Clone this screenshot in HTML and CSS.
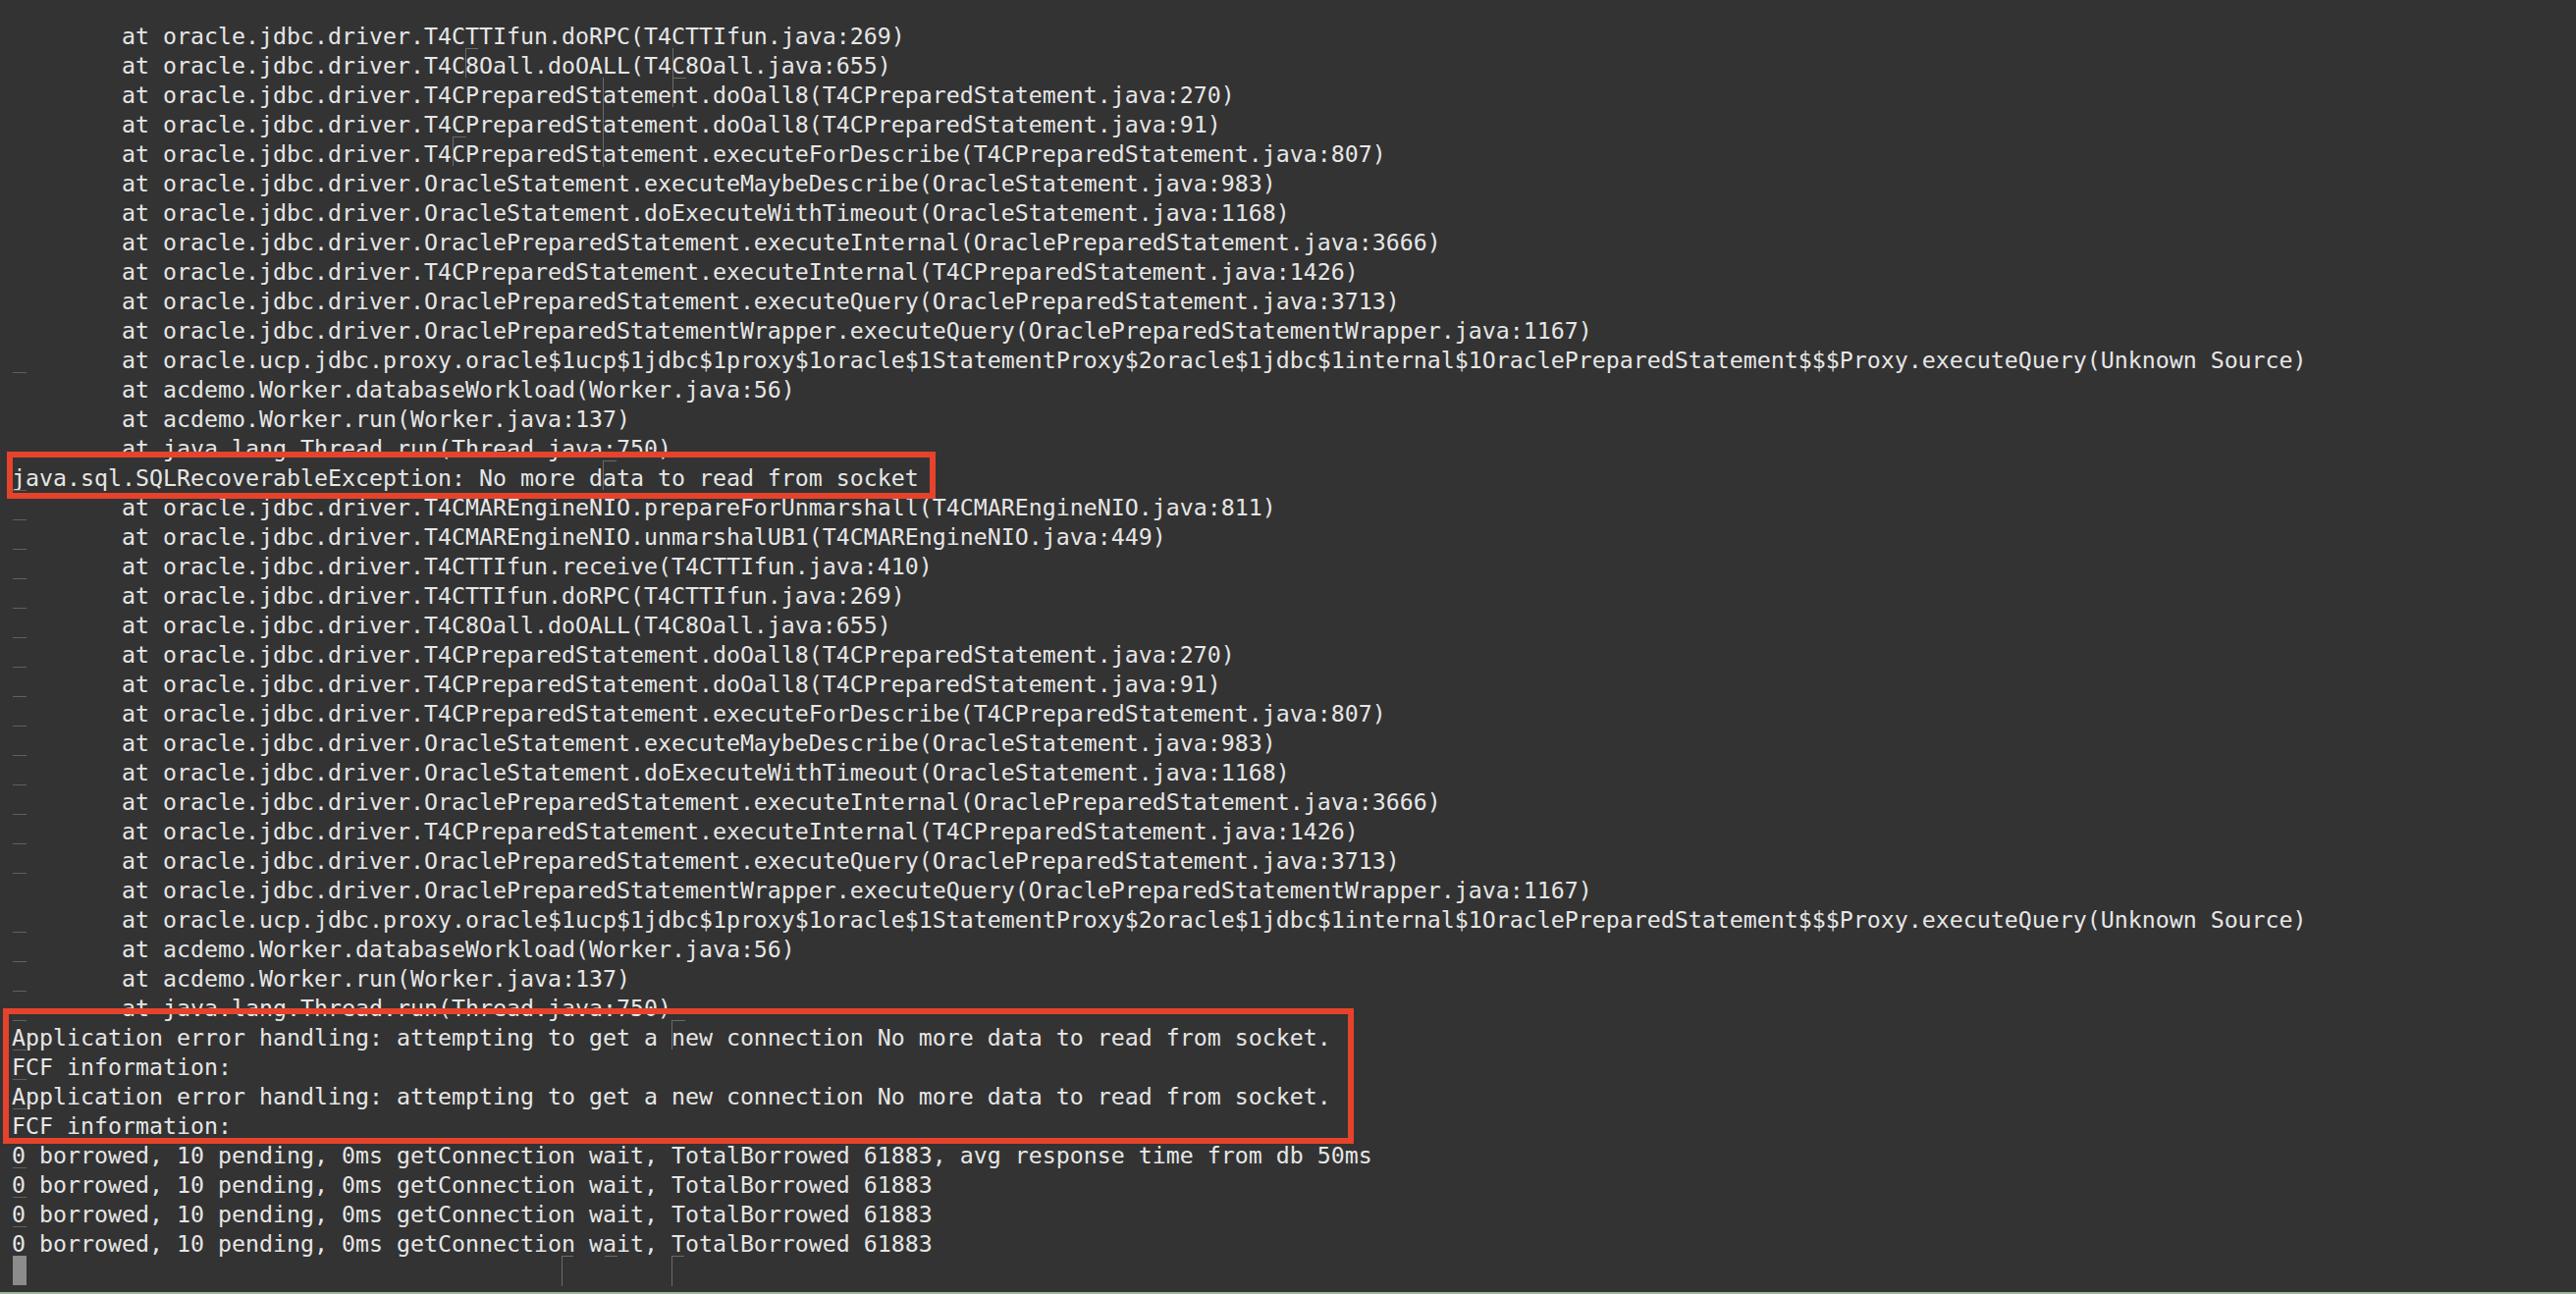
FILE: index.html
```html
<!DOCTYPE html>
<html>
<head>
<meta charset="utf-8">
<title>Terminal</title>
<link rel="stylesheet" href="styles.css">
</head>
<body>
<div class="term">
<div class="ln">        at oracle.jdbc.driver.T4CTTIfun.doRPC(T4CTTIfun.java:269)</div>
<div class="ln">        at oracle.jdbc.driver.T4C8Oall.doOALL(T4C8Oall.java:655)</div>
<div class="ln">        at oracle.jdbc.driver.T4CPreparedStatement.doOall8(T4CPreparedStatement.java:270)</div>
<div class="ln">        at oracle.jdbc.driver.T4CPreparedStatement.doOall8(T4CPreparedStatement.java:91)</div>
<div class="ln">        at oracle.jdbc.driver.T4CPreparedStatement.executeForDescribe(T4CPreparedStatement.java:807)</div>
<div class="ln">        at oracle.jdbc.driver.OracleStatement.executeMaybeDescribe(OracleStatement.java:983)</div>
<div class="ln">        at oracle.jdbc.driver.OracleStatement.doExecuteWithTimeout(OracleStatement.java:1168)</div>
<div class="ln">        at oracle.jdbc.driver.OraclePreparedStatement.executeInternal(OraclePreparedStatement.java:3666)</div>
<div class="ln">        at oracle.jdbc.driver.T4CPreparedStatement.executeInternal(T4CPreparedStatement.java:1426)</div>
<div class="ln">        at oracle.jdbc.driver.OraclePreparedStatement.executeQuery(OraclePreparedStatement.java:3713)</div>
<div class="ln">        at oracle.jdbc.driver.OraclePreparedStatementWrapper.executeQuery(OraclePreparedStatementWrapper.java:1167)</div>
<div class="ln">        at oracle.ucp.jdbc.proxy.oracle$1ucp$1jdbc$1proxy$1oracle$1StatementProxy$2oracle$1jdbc$1internal$1OraclePreparedStatement$$$Proxy.executeQuery(Unknown Source)</div>
<div class="ln m">        at acdemo.Worker.databaseWorkload(Worker.java:56)</div>
<div class="ln">        at acdemo.Worker.run(Worker.java:137)</div>
<div class="ln">        at java.lang.Thread.run(Thread.java:750)</div>
<div class="ln">java.sql.SQLRecoverableException: No more data to read from socket</div>
<div class="ln m">        at oracle.jdbc.driver.T4CMAREngineNIO.prepareForUnmarshall(T4CMAREngineNIO.java:811)</div>
<div class="ln m">        at oracle.jdbc.driver.T4CMAREngineNIO.unmarshalUB1(T4CMAREngineNIO.java:449)</div>
<div class="ln m">        at oracle.jdbc.driver.T4CTTIfun.receive(T4CTTIfun.java:410)</div>
<div class="ln m">        at oracle.jdbc.driver.T4CTTIfun.doRPC(T4CTTIfun.java:269)</div>
<div class="ln m">        at oracle.jdbc.driver.T4C8Oall.doOALL(T4C8Oall.java:655)</div>
<div class="ln m">        at oracle.jdbc.driver.T4CPreparedStatement.doOall8(T4CPreparedStatement.java:270)</div>
<div class="ln m">        at oracle.jdbc.driver.T4CPreparedStatement.doOall8(T4CPreparedStatement.java:91)</div>
<div class="ln m">        at oracle.jdbc.driver.T4CPreparedStatement.executeForDescribe(T4CPreparedStatement.java:807)</div>
<div class="ln m">        at oracle.jdbc.driver.OracleStatement.executeMaybeDescribe(OracleStatement.java:983)</div>
<div class="ln m">        at oracle.jdbc.driver.OracleStatement.doExecuteWithTimeout(OracleStatement.java:1168)</div>
<div class="ln m">        at oracle.jdbc.driver.OraclePreparedStatement.executeInternal(OraclePreparedStatement.java:3666)</div>
<div class="ln m">        at oracle.jdbc.driver.T4CPreparedStatement.executeInternal(T4CPreparedStatement.java:1426)</div>
<div class="ln m">        at oracle.jdbc.driver.OraclePreparedStatement.executeQuery(OraclePreparedStatement.java:3713)</div>
<div class="ln m">        at oracle.jdbc.driver.OraclePreparedStatementWrapper.executeQuery(OraclePreparedStatementWrapper.java:1167)</div>
<div class="ln">        at oracle.ucp.jdbc.proxy.oracle$1ucp$1jdbc$1proxy$1oracle$1StatementProxy$2oracle$1jdbc$1internal$1OraclePreparedStatement$$$Proxy.executeQuery(Unknown Source)</div>
<div class="ln m">        at acdemo.Worker.databaseWorkload(Worker.java:56)</div>
<div class="ln m">        at acdemo.Worker.run(Worker.java:137)</div>
<div class="ln m">        at java.lang.Thread.run(Thread.java:750)</div>
<div class="ln m">Application error handling: attempting to get a new connection No more data to read from socket.</div>
<div class="ln m">FCF information:</div>
<div class="ln m">Application error handling: attempting to get a new connection No more data to read from socket.</div>
<div class="ln m">FCF information:</div>
<div class="ln m">0 borrowed, 10 pending, 0ms getConnection wait, TotalBorrowed 61883, avg response time from db 50ms</div>
<div class="ln m">0 borrowed, 10 pending, 0ms getConnection wait, TotalBorrowed 61883</div>
<div class="ln m">0 borrowed, 10 pending, 0ms getConnection wait, TotalBorrowed 61883</div>
<div class="ln m">0 borrowed, 10 pending, 0ms getConnection wait, TotalBorrowed 61883</div>
<div class="ln"><div class="cursor"></div></div>
</div>

<div class="art v" style="left:474px;top:49px;height:30px"></div>
<div class="art h" style="left:474px;top:49px;width:13px"></div>
<div class="art v" style="left:685px;top:49px;height:60px"></div>
<div class="art h" style="left:685px;top:79px;width:14px"></div>
<div class="art v" style="left:614px;top:79px;height:91px"></div>
<div class="art v" style="left:461px;top:139px;height:30px"></div>
<div class="art h" style="left:461px;top:139px;width:14px"></div>
<div class="art v" style="left:614px;top:469px;height:30px"></div>
<div class="art h" style="left:614px;top:469px;width:14px"></div>
<div class="art v" style="left:684px;top:1039px;height:30px"></div>
<div class="art h" style="left:684px;top:1039px;width:14px"></div>
<div class="art v" style="left:572px;top:1279px;height:31px"></div>
<div class="art h" style="left:572px;top:1279px;width:12px"></div>
<div class="art h" style="left:616px;top:1279px;width:13px"></div>
<div class="art v" style="left:684px;top:1279px;height:31px"></div>
<div class="art h" style="left:684px;top:1279px;width:13px"></div>

<div class="box box-exc"></div>
<div class="box box-app"></div>

<div class="bottom-strip"></div>
</body>
</html>
```

FILE: styles.css
```css
html, body {
  margin: 0;
  padding: 0;
}

body {
  background: #333333;
  width: 2624px;
  height: 1318px;
  overflow: hidden;
  position: relative;
}

.term {
  padding: 22px 0 0 12px;
  font-family: "DejaVu Sans Mono", "Liberation Mono", monospace;
  font-size: 23.25px;
  line-height: 30px;
  color: #e6e6e6;
}

.ln {
  height: 30px;
  white-space: pre;
  position: relative;
}

.m::before {
  content: "";
  position: absolute;
  left: 1px;
  top: -3px;
  width: 14px;
  height: 1px;
  background: #606060;
}

.cursor {
  width: 14px;
  height: 30px;
  margin-top: -3px;
  margin-left: 1px;
  background: #8c8c8c;
}

.art {
  position: absolute;
  background: #6a6a6a;
}

.art.v {
  width: 1px;
}

.art.h {
  height: 1px;
}

.box {
  position: absolute;
  border: 6px solid #e5432b;
  box-sizing: border-box;
}

.box-exc {
  left: 7px;
  top: 460px;
  width: 946px;
  height: 48px;
}

.box-app {
  left: 3px;
  top: 1027px;
  width: 1376px;
  height: 138px;
}

.bottom-strip {
  position: absolute;
  left: 0;
  right: 0;
  bottom: 0;
  height: 2px;
  background: #9fb59f;
}
```
